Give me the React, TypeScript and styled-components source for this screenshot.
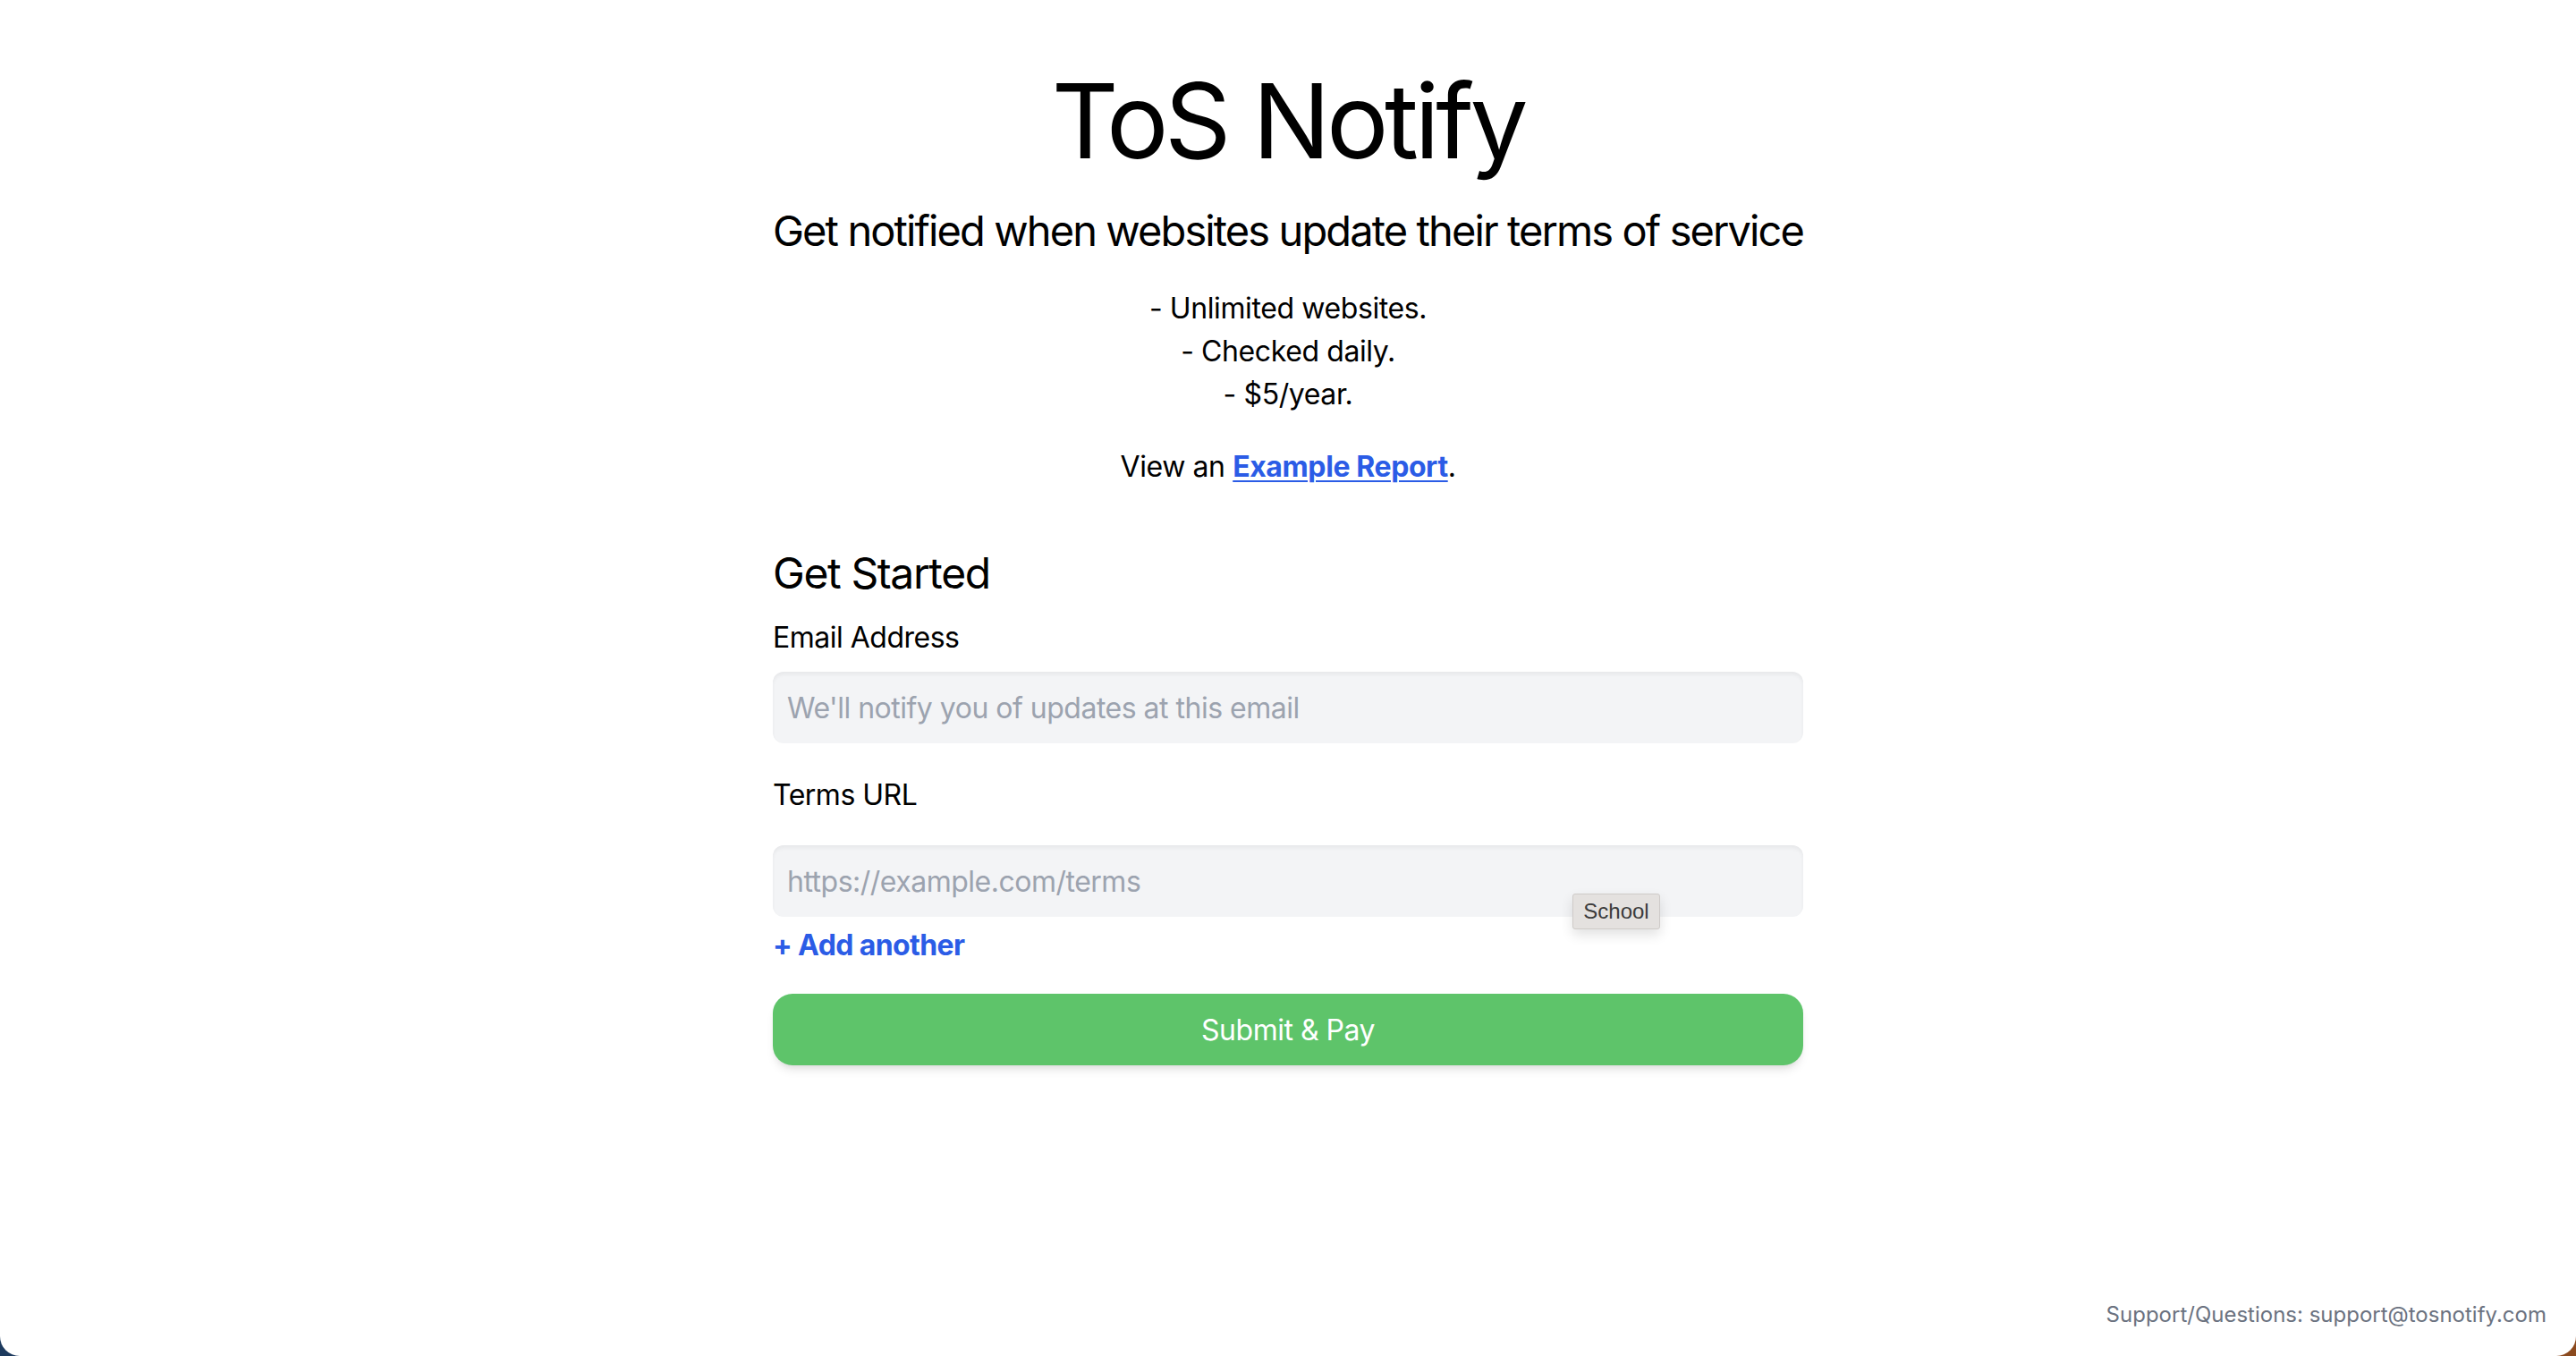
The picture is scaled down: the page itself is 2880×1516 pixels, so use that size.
import React from "react";
import styled, { createGlobalStyle } from "styled-components";

const GlobalStyle = createGlobalStyle`
  html, body {
    margin: 0;
    padding: 0;
    height: 100%;
  }
  body {
    background: linear-gradient(90deg, #1d3a5e 0%, #3a3f55 50%, #8c4a1e 100%);
    font-family: Inter, "Noto Sans", "Liberation Sans", sans-serif;
    color: #000;
  }
  #root {
    min-height: 100vh;
  }
  * { box-sizing: border-box; }
`;

const Window = styled.div`
  min-height: 100vh;
  background: #fff;
  border-radius: 0 0 22px 22px;
  display: flex;
  flex-direction: column;
  padding-top: 75px;
`;

const Header = styled.header`
  display: flex;
  flex-direction: column;
  align-items: center;
`;

const Title = styled.h1`
  margin: 0;
  font-size: 116px;
  line-height: 120px;
  font-weight: 400;
  text-align: center;
  letter-spacing: -4.5px;
`;

const Subtitle = styled.h2`
  margin: 31px 0 0;
  font-size: 47px;
  line-height: 64px;
  font-weight: 400;
  text-align: center;
  white-space: nowrap;
  letter-spacing: -1.9px;
`;

const Features = styled.div`
  margin-top: 31px;
  display: flex;
  flex-direction: column;
  align-items: center;
`;

const Feature = styled.p`
  margin: 0;
  font-size: 32px;
  line-height: 48px;
  letter-spacing: -0.4px;
`;

const ReportLine = styled.p`
  margin: 33px 0 0;
  text-align: center;
  font-size: 32px;
  line-height: 48px;
  letter-spacing: -0.4px;
`;

const ReportLink = styled.a`
  color: #2b5ce6;
  font-weight: 700;
  text-decoration: underline;
  text-decoration-thickness: 2px;
  text-underline-offset: 4px;
`;

const Form = styled.form`
  width: 1152px;
  margin: 63px auto 0;
  display: flex;
  flex-direction: column;
`;

const FormTitle = styled.h3`
  margin: 0;
  font-size: 48px;
  line-height: 64px;
  font-weight: 400;
  letter-spacing: -1.4px;
`;

const Label = styled.label<{ $gap: number }>`
  display: block;
  margin-top: ${(p) => p.$gap}px;
  font-size: 32px;
  line-height: 48px;
  letter-spacing: -0.5px;
`;

const FieldWrap = styled.div<{ $gap: number }>`
  position: relative;
  margin-top: ${(p) => p.$gap}px;
`;

const Input = styled.input`
  display: block;
  width: 100%;
  height: 80px;
  padding: 0 16px;
  border: none;
  border-radius: 12px;
  background: #f3f4f6;
  box-shadow: inset 0 3px 4px rgba(0, 0, 0, 0.05);
  font-family: inherit;
  font-size: 32px;
  letter-spacing: -0.5px;
  color: #111827;
  outline: none;
  &::placeholder {
    color: #9ca3af;
  }
`;

const Tooltip = styled.div`
  position: absolute;
  left: 894px;
  top: 54px;
  width: 98px;
  height: 40px;
  display: flex;
  align-items: center;
  justify-content: center;
  background: #e4e1df;
  border: 1px solid #cfcbc8;
  border-radius: 3px;
  box-shadow: 0 6px 14px rgba(0, 0, 0, 0.12);
  font-family: "Liberation Sans", Inter, sans-serif;
  font-size: 24px;
  color: #3b3b3b;
`;

const AddButton = styled.button`
  align-self: flex-start;
  margin-top: 8px;
  padding: 0;
  border: none;
  background: none;
  font-family: inherit;
  font-size: 32px;
  line-height: 48px;
  font-weight: 700;
  letter-spacing: -0.6px;
  color: #2b5ce6;
  cursor: pointer;
`;

const SubmitButton = styled.button`
  margin-top: 30px;
  height: 80px;
  width: 100%;
  border: none;
  border-radius: 22px;
  background: #5ec46a;
  box-shadow: 0 8px 12px -4px rgba(0, 0, 0, 0.12), 0 3px 6px -2px rgba(0, 0, 0, 0.06);
  color: #fff;
  font-family: inherit;
  font-size: 32px;
  letter-spacing: -0.5px;
  cursor: pointer;
`;

const Footer = styled.footer`
  margin-top: auto;
  padding: 0 33px 28px 0;
  text-align: right;
  font-size: 24px;
  line-height: 36px;
  color: #6b7280;
`;

export default function App() {
  return (
    <>
      <GlobalStyle />
      <Window>
        <Header>
          <Title>ToS Notify</Title>
          <Subtitle>Get notified when websites update their terms of service</Subtitle>
          <Features>
            <Feature>- Unlimited websites.</Feature>
            <Feature>- Checked daily.</Feature>
            <Feature>- $5/year.</Feature>
          </Features>
          <ReportLine>
            View an <ReportLink href="#">Example Report</ReportLink>.
          </ReportLine>
        </Header>
        <Form onSubmit={(e) => e.preventDefault()}>
          <FormTitle>Get Started</FormTitle>
          <Label $gap={16} htmlFor="email">Email Address</Label>
          <FieldWrap $gap={14}>
            <Input id="email" type="email" placeholder="We'll notify you of updates at this email" />
          </FieldWrap>
          <Label $gap={34} htmlFor="url">Terms URL</Label>
          <FieldWrap $gap={32}>
            <Input id="url" type="url" placeholder="https://example.com/terms" />
            <Tooltip>School</Tooltip>
          </FieldWrap>
          <AddButton type="button">+ Add another</AddButton>
          <SubmitButton type="submit">Submit &amp; Pay</SubmitButton>
        </Form>
        <Footer>Support/Questions: support@tosnotify.com</Footer>
      </Window>
    </>
  );
}
